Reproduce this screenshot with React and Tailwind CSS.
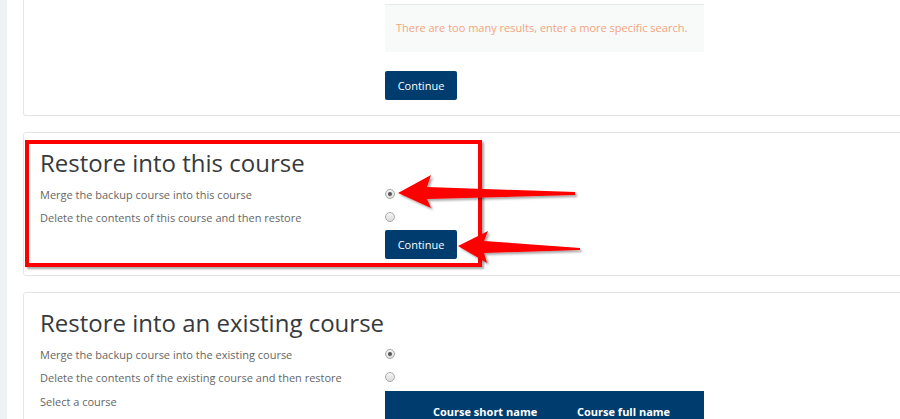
import React from 'react';

const font = { fontFamily: '"Open Sans", "Liberation Sans", sans-serif' };

const Radio = ({ checked }) => (
  <span className="flex w-[10px] h-[10px] rounded-full border border-[#a9a9a9] bg-[linear-gradient(#f4f4f4,#dcdcdc)] items-center justify-center">
    {checked && <span className="w-[4px] h-[4px] rounded-full bg-[#555]" />}
  </span>
);

const ContinueButton = () => (
  <button className="w-[72px] h-[29px] bg-[#003d6e] rounded-[2px] text-white text-[11px] leading-none">
    Continue
  </button>
);

const OptionRow = ({ label, checked }) => (
  <div className="grid grid-cols-[345px_1fr] h-[23px] items-center">
    <span className="text-[11px] text-[#666]">{label}</span>
    <div className="flex -mt-[4px]">
      <Radio checked={checked} />
    </div>
  </div>
);

const Heading = ({ children }) => (
  <h2 className="text-[24px] leading-[31px] text-[#373a3c] mb-[6px]">{children}</h2>
);

export default function App() {
  return (
    <div className="relative w-[900px] h-[419px] overflow-hidden flex bg-white" style={font}>
      {/* left rail */}
      <div className="w-[7px] shrink-0 bg-[#eef2f3]" />

      <div className="pl-[16px] flex flex-col gap-[16px]">
        {/* search results card (top cut off) */}
        <div className="w-[900px] border-x border-b border-[#e1e5e7] rounded-b-[3px] pt-[4px] pb-[15px] pl-[16px]">
          <div className="grid grid-cols-[345px_1fr]">
            <div />
            <div className="flex flex-col gap-[19px]">
              <div className="w-[319px] h-[48px] bg-[#f8f9f9] border-t border-[#e6e9ea] flex items-center pl-[11px]">
                <span className="text-[11px] text-[#f2a57e]">
                  There are too many results, enter a more specific search.
                </span>
              </div>
              <ContinueButton />
            </div>
          </div>
        </div>

        {/* restore into this course */}
        <div className="w-[900px] border border-[#e1e5e7] rounded-[3px] pt-[14px] pb-[16px] pl-[16px]">
          <Heading>Restore into this course</Heading>
          <OptionRow label="Merge the backup course into this course" checked />
          <OptionRow label="Delete the contents of this course and then restore" />
          <div className="grid grid-cols-[345px_1fr]">
            <div />
            <ContinueButton />
          </div>
        </div>

        {/* restore into existing course */}
        <div className="w-[900px] border border-[#e1e5e7] rounded-[3px] pt-[14px] pl-[16px]">
          <Heading>Restore into an existing course</Heading>
          <OptionRow label="Merge the backup course into the existing course" checked />
          <OptionRow label="Delete the contents of the existing course and then restore" />
          <div className="grid grid-cols-[345px_1fr]">
            <span className="text-[11px] leading-[23px] text-[#666]">Select a course</span>
            <div className="mt-[1px] w-[319px] h-[60px] bg-[#003d6e] flex pt-[13px] text-[11px] font-bold text-white">
              <span className="pl-[48px] w-[192px]">Course short name</span>
              <span>Course full name</span>
            </div>
          </div>
        </div>
      </div>

      {/* annotation: highlight box */}
      <div className="absolute left-[25px] top-[140px] w-[457px] h-[127px] border-4 border-[#ff0000] shadow-[2px_2px_2px_rgba(0,0,0,0.35)]" />

      {/* annotation: arrows */}
      <svg className="absolute left-0 top-0" width="900" height="419" viewBox="0 0 900 419">
        <defs>
          <filter id="sh" x="-10%" y="-50%" width="130%" height="200%">
            <feDropShadow dx="2" dy="2" stdDeviation="1.2" floodColor="#000" floodOpacity="0.35" />
          </filter>
        </defs>
        <polygon
          filter="url(#sh)"
          fill="#ff0000"
          points="398,193 431,175 427,187 575,192 575,195 427,199 431,208"
        />
        <polygon
          filter="url(#sh)"
          fill="#ff0000"
          points="458,246 488,231 484,241 580,248 580,250 484,253 487,263"
        />
      </svg>
    </div>
  );
}
